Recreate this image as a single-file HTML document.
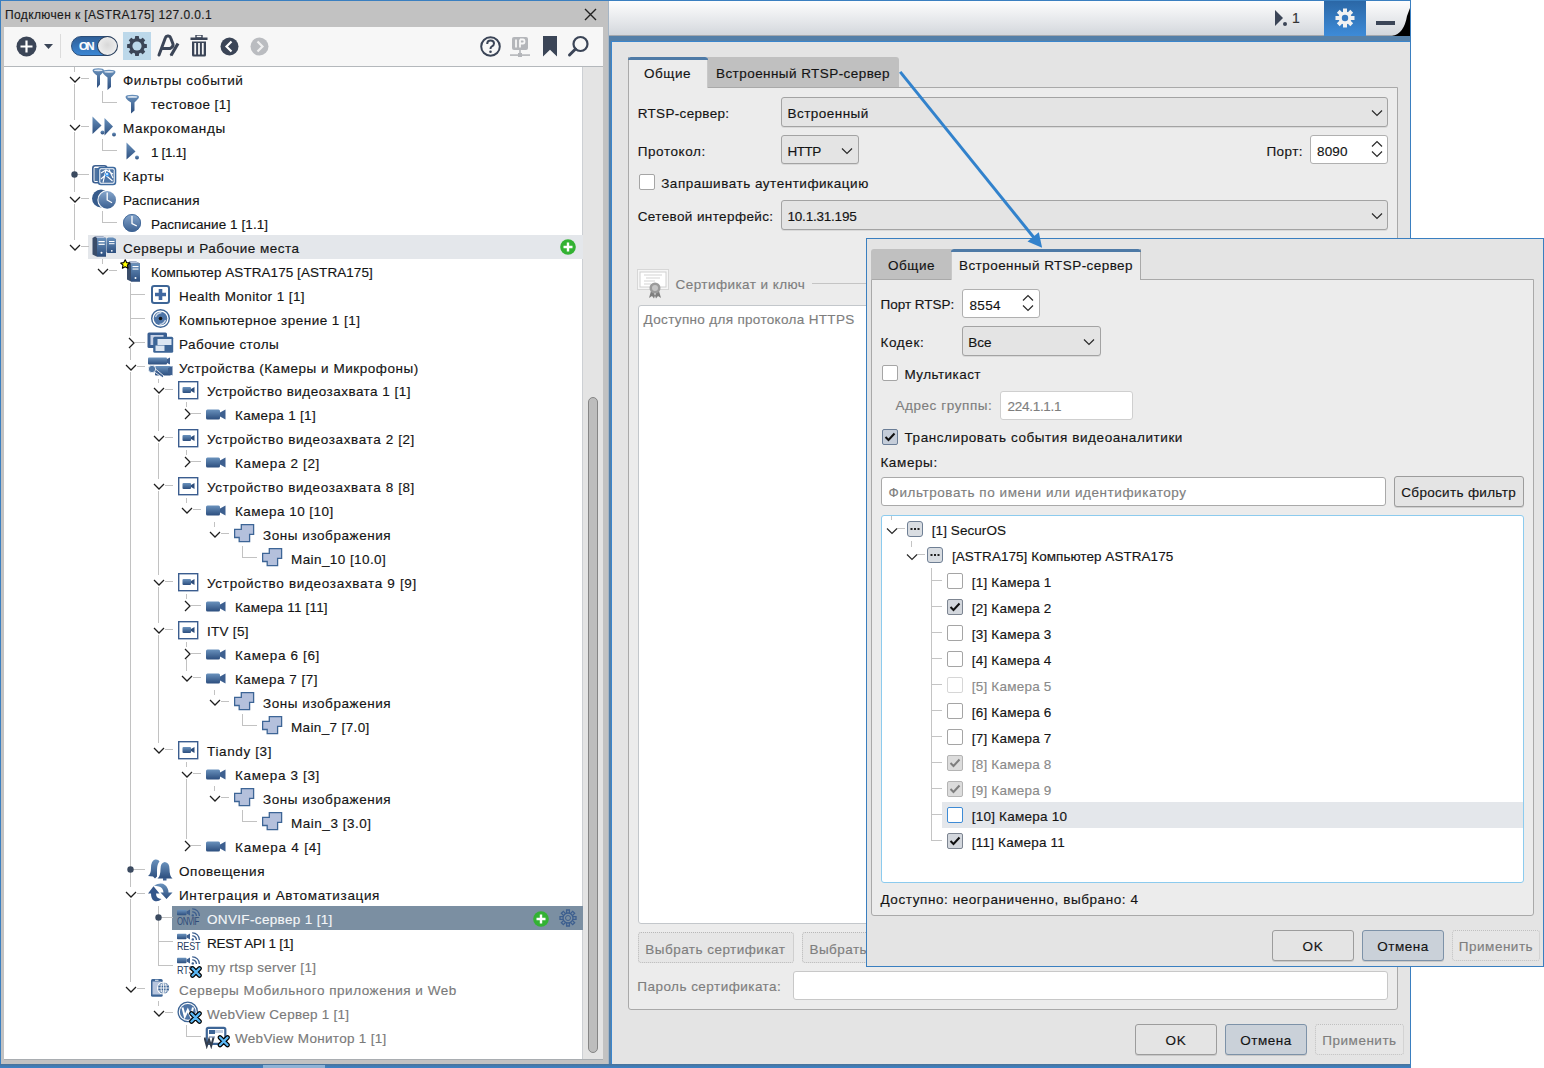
<!DOCTYPE html>
<html><head><meta charset="utf-8"><style>
html,body{margin:0;padding:0;width:1544px;height:1068px;overflow:hidden;background:#fff;}
body{position:relative;font-family:"Liberation Sans", sans-serif;}
body>div,body>svg{position:absolute;box-sizing:border-box;}
.t{white-space:nowrap;line-height:20px;-webkit-text-stroke:0.15px currentColor;}

</style></head><body>
<svg style="left:0;top:0;width:0;height:0" width="0" height="0"><defs>
<linearGradient id="gIcon" x1="0" y1="0" x2="0" y2="1"><stop offset="0" stop-color="#6a92bd"/><stop offset="1" stop-color="#2c4e7e"/></linearGradient>
<linearGradient id="gTitle" x1="0" y1="0" x2="0" y2="1"><stop offset="0" stop-color="#ffffff"/><stop offset="1" stop-color="#d0d4d9"/></linearGradient>
<linearGradient id="gGear" x1="0" y1="0" x2="0" y2="1"><stop offset="0" stop-color="#2d6aaa"/><stop offset="1" stop-color="#3f8fdc"/></linearGradient>
<linearGradient id="gClock" x1="0" y1="0" x2="0" y2="1"><stop offset="0" stop-color="#86a6cc"/><stop offset="1" stop-color="#3a5f90"/></linearGradient>
<linearGradient id="gZone" x1="0" y1="0" x2="0" y2="1"><stop offset="0" stop-color="#c5cde0"/><stop offset="1" stop-color="#9eaccc"/></linearGradient>
</defs></svg>
<div style="left:0px;top:0px;width:1411px;height:1px;background:#3a7fc0"></div>
<div style="left:0px;top:0px;width:1px;height:1068px;background:#3a7fc0"></div>
<div style="left:1px;top:1px;width:607px;height:1063px;background:#c2c2c2"></div>
<div class="t" style="left:5.0px;top:5px;font-size:12px;color:#1a1a1a;letter-spacing:0.384px;">Подключен к [ASTRA175] 127.0.0.1</div>
<svg style="left:584px;top:8px;" width="13" height="13" viewBox="0 0 13 13"><path d="M1 1L12 12M12 1L1 12" stroke="#222" stroke-width="1.4"/></svg>
<div style="left:4px;top:27px;width:599px;height:39px;background:#f7f7f7"></div>
<div style="left:4px;top:66px;width:599px;height:1px;background:#b4b8bc"></div>
<div style="left:4px;top:67px;width:578px;height:992px;background:#ffffff"></div>
<div style="left:4px;top:1059px;width:599px;height:1px;background:#a9adb1"></div>
<div style="left:582px;top:67px;width:21px;height:992px;background:#e4e4e4;border-left:1px solid #cdd0d4"></div>
<div style="left:588px;top:397px;width:10px;height:656px;background:#bdbdbd;border:1px solid #858585;border-radius:5px"></div>
<div style="left:0px;top:1064px;width:1411px;height:4px;background:linear-gradient(#4a7399,#3b82c8)"></div>
<div style="left:263px;top:1065px;width:62px;height:3px;background:#8fb3d6"></div>
<div style="left:608px;top:1px;width:1px;height:1063px;background:#a5b5c5"></div>
<div style="left:609px;top:1px;width:801px;height:35px;background:linear-gradient(#fdfdfd,#e6e8eb 55%,#d2d6db)"></div>
<div style="left:609px;top:35px;width:801px;height:1px;background:#a4a8ad"></div>
<div style="left:1324px;top:1px;width:42px;height:35px;background:linear-gradient(#2b67a6,#3d8bd8)"></div>
<svg style="left:1390px;top:8px;" width="20" height="28" viewBox="0 0 20 28"><path d="M20 0 L20 28 L2 28 Q14 26 17 8 Z" fill="#000"/></svg>
<div style="left:609px;top:36px;width:801px;height:5px;background:#5580a8"></div>
<div style="left:609px;top:36px;width:3px;height:1028px;background:#5580a8"></div>
<div style="left:611px;top:41px;width:799px;height:1px;background:#3a85cc"></div>
<div style="left:611px;top:41px;width:1px;height:1023px;background:#3a85cc"></div>
<div style="left:1410px;top:0px;width:1px;height:1068px;background:#3a7fc0"></div>
<div style="left:612px;top:42px;width:798px;height:1022px;background:#e4e4e4"></div>
<svg style="left:1274px;top:9px;" width="14" height="18" viewBox="0 0 14 18"><path d="M1 1 L9 9 L1 17 Z" fill="#3b4557"/><circle cx="11" cy="15" r="2" fill="#3b4557"/></svg>
<div class="t" style="left:1292.0px;top:8px;font-size:14px;color:#333;letter-spacing:-0.797px;">1</div>
<svg style="left:1334px;top:7px;" width="22" height="22" viewBox="0 0 22 22"><g fill="#f2f2f2"><circle cx="11" cy="11" r="6.5"/><rect x="9" y="1.5" width="4" height="5" transform="rotate(0 11 11)"/><rect x="9" y="1.5" width="4" height="5" transform="rotate(45 11 11)"/><rect x="9" y="1.5" width="4" height="5" transform="rotate(90 11 11)"/><rect x="9" y="1.5" width="4" height="5" transform="rotate(135 11 11)"/><rect x="9" y="1.5" width="4" height="5" transform="rotate(180 11 11)"/><rect x="9" y="1.5" width="4" height="5" transform="rotate(225 11 11)"/><rect x="9" y="1.5" width="4" height="5" transform="rotate(270 11 11)"/><rect x="9" y="1.5" width="4" height="5" transform="rotate(315 11 11)"/></g><circle cx="11" cy="11" r="3.2" fill="#3579c0"/></svg>
<div style="left:1376px;top:21px;width:19px;height:4px;background:#3b4557"></div>
<div style="left:707px;top:57px;width:192px;height:30px;background:#c0c0c0;border-top-right-radius:3px"></div>
<div style="left:628px;top:87px;width:770px;height:923px;background:#ececec;border:1px solid #a9a9a9;border-radius:0 0 3px 3px"></div>
<div style="left:628px;top:57px;width:80px;height:31px;background:#ececec;border-left:1px solid #a9a9a9;border-right:1px solid #c8c8c8"></div>
<div style="left:628px;top:57px;width:80px;height:3px;background:#4e7aa6;border-radius:3px 3px 0 0"></div>
<div class="t" style="left:644.0px;top:64px;font-size:13.5px;color:#141414;letter-spacing:0.522px;">Общие</div>
<div class="t" style="left:716.0px;top:64px;font-size:13.5px;color:#141414;letter-spacing:0.435px;">Встроенный RTSP-сервер</div>
<div class="t" style="left:637.7px;top:104px;font-size:13.5px;color:#141414;letter-spacing:0.324px;">RTSP-сервер:</div>
<div style="left:781px;top:97px;width:607px;height:30px;background:#e4e4e4;border:1px solid #a3a3a3;border-radius:3px;box-shadow:0 1px 0 rgba(0,0,0,0.08)"></div>
<div class="t" style="left:787.5px;top:104px;font-size:13.5px;color:#141414;letter-spacing:0.467px;">Встроенный</div>
<svg style="left:1371px;top:109px;" width="12" height="8" viewBox="0 0 12 8"><path d="M1 1.5 L6 6.5 L11 1.5" fill="none" stroke="#2a2a2a" stroke-width="1.2"/></svg>
<div class="t" style="left:637.7px;top:142px;font-size:13.5px;color:#141414;letter-spacing:0.593px;">Протокол:</div>
<div style="left:781px;top:135px;width:78px;height:29px;background:#e4e4e4;border:1px solid #a3a3a3;border-radius:3px;box-shadow:0 1px 0 rgba(0,0,0,0.08)"></div>
<div class="t" style="left:787.5px;top:142px;font-size:13.5px;color:#141414;letter-spacing:-0.512px;">HTTP</div>
<svg style="left:841px;top:147px;" width="12" height="8" viewBox="0 0 12 8"><path d="M1 1.5 L6 6.5 L11 1.5" fill="none" stroke="#2a2a2a" stroke-width="1.2"/></svg>
<div class="t" style="left:1266.4px;top:142px;font-size:13.5px;color:#141414;letter-spacing:0.447px;">Порт:</div>
<div style="left:1310px;top:135px;width:78px;height:29px;background:#fff;border:1px solid #b0b0b0;border-radius:3px"></div>
<div class="t" style="left:1317.0px;top:142px;font-size:13.5px;color:#141414;letter-spacing:0.150px;">8090</div>
<svg style="left:1371px;top:139px;" width="12" height="20" viewBox="0 0 12 20"><path d="M1 7.5 L6 2.5 L11 7.5 M1 12.5 L6 17.5 L11 12.5" fill="none" stroke="#2a2a2a" stroke-width="1.2"/></svg>
<div style="left:639px;top:174px;width:16px;height:16px;background:#fff;border:1px solid #a5a5a5;border-radius:2px"></div>
<div class="t" style="left:661.2px;top:174px;font-size:13.5px;color:#141414;letter-spacing:0.517px;">Запрашивать аутентификацию</div>
<div class="t" style="left:637.7px;top:207px;font-size:13.5px;color:#141414;letter-spacing:0.385px;">Сетевой интерфейс:</div>
<div style="left:781px;top:200px;width:607px;height:30px;background:#e4e4e4;border:1px solid #a3a3a3;border-radius:3px;box-shadow:0 1px 0 rgba(0,0,0,0.08)"></div>
<div class="t" style="left:787.5px;top:207px;font-size:13.5px;color:#141414;letter-spacing:-0.212px;">10.1.31.195</div>
<svg style="left:1371px;top:212px;" width="12" height="8" viewBox="0 0 12 8"><path d="M1 1.5 L6 6.5 L11 1.5" fill="none" stroke="#2a2a2a" stroke-width="1.2"/></svg>
<svg style="left:637px;top:269px;" width="33" height="30" viewBox="0 0 33 30"><rect x="0.5" y="0.5" width="31" height="20" fill="#f6f6f6" stroke="#bdbdbd" stroke-dasharray="1 1"/><rect x="3" y="3" width="26" height="15" fill="#fff" stroke="#d0d0d0"/><path d="M7 6H25M9 9H23M7 12H18M7 15H14" stroke="#c8c8c8" stroke-width="0.8"/><path d="M14 22 L12 29 L15 27 L17 29.5 L19 24 Z M22 22 L24 29 L21 27 L19 29.5 L17 24 Z" fill="#7e7e7e"/><circle cx="18" cy="19" r="5.5" fill="#9a9a9a"/><circle cx="18" cy="19" r="3" fill="#c4c4c4"/></svg>
<div class="t" style="left:675.6px;top:275px;font-size:13.5px;color:#7e7e7e;letter-spacing:0.431px;">Сертификат и ключ</div>
<div style="left:812px;top:283px;width:576px;height:1px;background:#c4c4c4"></div>
<div style="left:638px;top:305px;width:750px;height:619px;background:#fff;border:1px solid #c3c7cb;border-radius:3px"></div>
<div class="t" style="left:643.6px;top:310px;font-size:13.5px;color:#7e7e7e;letter-spacing:0.332px;">Доступно для протокола HTTPS</div>
<div style="left:638px;top:932px;width:156px;height:31px;background:#e6e6e6;border:1px dotted #b8b8b8;border-radius:3px"></div>
<div class="t" style="left:645.3px;top:940px;font-size:13.5px;color:#7e7e7e;letter-spacing:0.475px;">Выбрать сертификат</div>
<div style="left:802px;top:932px;width:156px;height:31px;background:#e6e6e6;border:1px dotted #b8b8b8;border-radius:3px"></div>
<div class="t" style="left:809.4px;top:940px;font-size:13.5px;color:#7e7e7e;letter-spacing:0.482px;">Выбрать ключ</div>
<div class="t" style="left:637.3px;top:977px;font-size:13.5px;color:#7e7e7e;letter-spacing:0.466px;">Пароль сертификата:</div>
<div style="left:793px;top:971px;width:595px;height:29px;background:#fff;border:1px solid #c8c8c8;border-radius:3px"></div>
<div style="left:1135px;top:1024px;width:82px;height:31px;background:#e4e4e4;border:1px solid #9c9c9c;border-radius:3px;box-shadow:0 1px 0 rgba(0,0,0,0.12)"></div>
<div class="t" style="left:1176.0px;top:1031px;font-size:13.5px;color:#141414;letter-spacing:0.634px;transform:translateX(-50%);">OK</div>
<div style="left:1225px;top:1024px;width:82px;height:31px;background:#cad1d9;border:1px solid #7d92a8;border-radius:3px;box-shadow:0 1px 0 rgba(0,0,0,0.12)"></div>
<div class="t" style="left:1266.0px;top:1031px;font-size:13.5px;color:#141414;letter-spacing:0.525px;transform:translateX(-50%);">Отмена</div>
<div style="left:1315px;top:1024px;width:89px;height:31px;background:#e6e6e6;border:1px dotted #c0c0c0;border-radius:3px"></div>
<div class="t" style="left:1359.5px;top:1031px;font-size:13.5px;color:#7e7e7e;letter-spacing:0.504px;transform:translateX(-50%);">Применить</div>
<div style="left:866px;top:238px;width:678px;height:729px;background:#e4e4e4;border:1px solid #3a7fc0"></div>
<div style="left:871px;top:249px;width:81px;height:30px;background:#c0c0c0;border-top-left-radius:3px"></div>
<div style="left:871px;top:279px;width:663px;height:637px;background:#ececec;border:1px solid #a9a9a9;border-radius:0 0 3px 3px"></div>
<div style="left:951px;top:249px;width:190px;height:31px;background:#ececec;border-left:1px solid #c8c8c8;border-right:1px solid #a9a9a9"></div>
<div style="left:951px;top:249px;width:190px;height:3px;background:#4e7aa6;border-radius:3px 3px 0 0"></div>
<div class="t" style="left:888.0px;top:256px;font-size:13.5px;color:#141414;letter-spacing:0.522px;">Общие</div>
<div class="t" style="left:959.0px;top:256px;font-size:13.5px;color:#141414;letter-spacing:0.435px;">Встроенный RTSP-сервер</div>
<div class="t" style="left:880.5px;top:295px;font-size:13.5px;color:#141414;letter-spacing:-0.008px;">Порт RTSP:</div>
<div style="left:962px;top:289px;width:78px;height:29px;background:#fff;border:1px solid #b0b0b0;border-radius:3px"></div>
<div class="t" style="left:969.4px;top:296px;font-size:13.5px;color:#141414;letter-spacing:0.363px;">8554</div>
<svg style="left:1022px;top:293px;" width="12" height="20" viewBox="0 0 12 20"><path d="M1 7.5 L6 2.5 L11 7.5 M1 12.5 L6 17.5 L11 12.5" fill="none" stroke="#2a2a2a" stroke-width="1.2"/></svg>
<div class="t" style="left:880.5px;top:333px;font-size:13.5px;color:#141414;letter-spacing:0.629px;">Кодек:</div>
<div style="left:962px;top:326px;width:139px;height:30px;background:#e4e4e4;border:1px solid #a3a3a3;border-radius:3px;box-shadow:0 1px 0 rgba(0,0,0,0.08)"></div>
<div class="t" style="left:968.3px;top:333px;font-size:13.5px;color:#141414;letter-spacing:-0.022px;">Все</div>
<svg style="left:1083px;top:338px;" width="12" height="8" viewBox="0 0 12 8"><path d="M1 1.5 L6 6.5 L11 1.5" fill="none" stroke="#2a2a2a" stroke-width="1.2"/></svg>
<div style="left:882px;top:365px;width:16px;height:16px;background:#fff;border:1px solid #a5a5a5;border-radius:2px"></div>
<div class="t" style="left:904.5px;top:365px;font-size:13.5px;color:#141414;letter-spacing:0.442px;">Мультикаст</div>
<div class="t" style="left:895.4px;top:396px;font-size:13.5px;color:#7e7e7e;letter-spacing:0.576px;">Адрес группы:</div>
<div style="left:1000px;top:391px;width:133px;height:29px;background:#fff;border:1px solid #cfcfcf;border-radius:3px"></div>
<div class="t" style="left:1007.5px;top:397px;font-size:13.5px;color:#7e7e7e;letter-spacing:-0.279px;">224.1.1.1</div>
<div style="left:882px;top:429px;width:16px;height:16px;background:#c5cdd9;border:1px solid #6a7d96;border-radius:2px"></div>
<svg style="left:882px;top:429px;" width="16" height="16" viewBox="0 0 16 16"><path d="M3.5 8 L6.5 11 L12.5 4.5" fill="none" stroke="#111" stroke-width="2"/></svg>
<div class="t" style="left:904.5px;top:428px;font-size:13.5px;color:#141414;letter-spacing:0.579px;">Транслировать события видеоаналитики</div>
<div class="t" style="left:880.4px;top:453px;font-size:13.5px;color:#141414;letter-spacing:0.611px;">Камеры:</div>
<div style="left:881px;top:477px;width:505px;height:29px;background:#fff;border:1px solid #a9a9a9;border-radius:3px"></div>
<div class="t" style="left:888.6px;top:483px;font-size:13.5px;color:#7e7e7e;letter-spacing:0.558px;">Фильтровать по имени или идентификатору</div>
<div style="left:1394px;top:476px;width:130px;height:31px;background:#e4e4e4;border:1px solid #9c9c9c;border-radius:3px;box-shadow:0 1px 0 rgba(0,0,0,0.12)"></div>
<div class="t" style="left:1401.3px;top:483px;font-size:13.5px;color:#141414;letter-spacing:0.316px;">Сбросить фильтр</div>
<div style="left:881px;top:515px;width:643px;height:368px;background:#fff;border:1px solid #8ccbee;border-radius:3px"></div>
<div style="left:891px;top:516px;width:1px;height:4px;background:#c4c4c4"></div>
<div style="left:911px;top:541px;width:1px;height:6px;background:#c4c4c4"></div>
<div style="left:931px;top:568px;width:1px;height:273px;background:#c4c4c4"></div>
<div style="left:931px;top:580px;width:11px;height:1px;background:#c4c4c4"></div>
<div style="left:931px;top:606px;width:11px;height:1px;background:#c4c4c4"></div>
<div style="left:931px;top:632px;width:11px;height:1px;background:#c4c4c4"></div>
<div style="left:931px;top:658px;width:11px;height:1px;background:#c4c4c4"></div>
<div style="left:931px;top:684px;width:11px;height:1px;background:#c4c4c4"></div>
<div style="left:931px;top:710px;width:11px;height:1px;background:#c4c4c4"></div>
<div style="left:931px;top:736px;width:11px;height:1px;background:#c4c4c4"></div>
<div style="left:931px;top:762px;width:11px;height:1px;background:#c4c4c4"></div>
<div style="left:931px;top:788px;width:11px;height:1px;background:#c4c4c4"></div>
<div style="left:931px;top:814px;width:11px;height:1px;background:#c4c4c4"></div>
<div style="left:931px;top:840px;width:11px;height:1px;background:#c4c4c4"></div>
<div style="left:897px;top:528px;width:8px;height:1px;background:#c4c4c4"></div>
<div style="left:917px;top:554px;width:8px;height:1px;background:#c4c4c4"></div>
<div style="left:942px;top:802px;width:581px;height:26px;background:#e4e7eb"></div>
<svg style="left:886px;top:527px;" width="12" height="8" viewBox="0 0 12 8"><path d="M1 1.5 L6 6.5 L11 1.5" fill="none" stroke="#2a2a2a" stroke-width="1.2"/></svg>
<svg style="left:906px;top:553px;" width="12" height="8" viewBox="0 0 12 8"><path d="M1 1.5 L6 6.5 L11 1.5" fill="none" stroke="#2a2a2a" stroke-width="1.2"/></svg>
<div style="left:907px;top:521px;width:16px;height:16px;background:#d9dde2;border:1px solid #6f7f94;border-radius:3px"></div>
<svg style="left:907px;top:521px;" width="16" height="16" viewBox="0 0 16 16"><g fill="#222"><rect x="3.5" y="7" width="2" height="2"/><rect x="7" y="7" width="2" height="2"/><rect x="10.5" y="7" width="2" height="2"/></g></svg>
<div style="left:927px;top:547px;width:16px;height:16px;background:#d9dde2;border:1px solid #6f7f94;border-radius:3px"></div>
<svg style="left:927px;top:547px;" width="16" height="16" viewBox="0 0 16 16"><g fill="#222"><rect x="3.5" y="7" width="2" height="2"/><rect x="7" y="7" width="2" height="2"/><rect x="10.5" y="7" width="2" height="2"/></g></svg>
<div class="t" style="left:931.8px;top:521px;font-size:13.5px;color:#141414;letter-spacing:0.068px;">[1] SecurOS</div>
<div class="t" style="left:951.9px;top:547px;font-size:13.5px;color:#141414;letter-spacing:0.050px;">[ASTRA175] Компьютер ASTRA175</div>
<div style="left:947px;top:573px;width:16px;height:16px;background:#fff;border:1px solid #a5a5a5;border-radius:2px"></div>
<div class="t" style="left:971.7px;top:573px;font-size:13.5px;color:#141414;letter-spacing:0.225px;">[1] Камера 1</div>
<div style="left:947px;top:599px;width:16px;height:16px;background:#d3d7dd;border:1px solid #7d8591;border-radius:2px"></div>
<svg style="left:947px;top:599px;" width="16" height="16" viewBox="0 0 16 16"><path d="M3.5 8 L6.5 11 L12.5 4.5" fill="none" stroke="#111" stroke-width="2"/></svg>
<div class="t" style="left:971.7px;top:599px;font-size:13.5px;color:#141414;letter-spacing:0.225px;">[2] Камера 2</div>
<div style="left:947px;top:625px;width:16px;height:16px;background:#fff;border:1px solid #a5a5a5;border-radius:2px"></div>
<div class="t" style="left:971.7px;top:625px;font-size:13.5px;color:#141414;letter-spacing:0.225px;">[3] Камера 3</div>
<div style="left:947px;top:651px;width:16px;height:16px;background:#fff;border:1px solid #a5a5a5;border-radius:2px"></div>
<div class="t" style="left:971.7px;top:651px;font-size:13.5px;color:#141414;letter-spacing:0.225px;">[4] Камера 4</div>
<div style="left:947px;top:677px;width:16px;height:16px;background:#fff;border:1px solid #d6d6d6;border-radius:2px"></div>
<div class="t" style="left:971.7px;top:677px;font-size:13.5px;color:#8a8a8a;letter-spacing:0.225px;">[5] Камера 5</div>
<div style="left:947px;top:703px;width:16px;height:16px;background:#fff;border:1px solid #a5a5a5;border-radius:2px"></div>
<div class="t" style="left:971.7px;top:703px;font-size:13.5px;color:#141414;letter-spacing:0.225px;">[6] Камера 6</div>
<div style="left:947px;top:729px;width:16px;height:16px;background:#fff;border:1px solid #a5a5a5;border-radius:2px"></div>
<div class="t" style="left:971.7px;top:729px;font-size:13.5px;color:#141414;letter-spacing:0.225px;">[7] Камера 7</div>
<div style="left:947px;top:755px;width:16px;height:16px;background:#dcdcdc;border:1px solid #b4b4b4;border-radius:2px"></div>
<svg style="left:947px;top:755px;" width="16" height="16" viewBox="0 0 16 16"><path d="M3.5 8 L6.5 11 L12.5 4.5" fill="none" stroke="#7e7e7e" stroke-width="2"/></svg>
<div class="t" style="left:971.7px;top:755px;font-size:13.5px;color:#8a8a8a;letter-spacing:0.225px;">[8] Камера 8</div>
<div style="left:947px;top:781px;width:16px;height:16px;background:#dcdcdc;border:1px solid #b4b4b4;border-radius:2px"></div>
<svg style="left:947px;top:781px;" width="16" height="16" viewBox="0 0 16 16"><path d="M3.5 8 L6.5 11 L12.5 4.5" fill="none" stroke="#7e7e7e" stroke-width="2"/></svg>
<div class="t" style="left:971.7px;top:781px;font-size:13.5px;color:#8a8a8a;letter-spacing:0.225px;">[9] Камера 9</div>
<div style="left:947px;top:807px;width:16px;height:16px;background:#fff;border:1px solid #3d8bd6;border-radius:2px"></div>
<div class="t" style="left:971.7px;top:807px;font-size:13.5px;color:#141414;letter-spacing:0.231px;">[10] Камера 10</div>
<div style="left:947px;top:833px;width:16px;height:16px;background:#d3d7dd;border:1px solid #7d8591;border-radius:2px"></div>
<svg style="left:947px;top:833px;" width="16" height="16" viewBox="0 0 16 16"><path d="M3.5 8 L6.5 11 L12.5 4.5" fill="none" stroke="#111" stroke-width="2"/></svg>
<div class="t" style="left:971.7px;top:833px;font-size:13.5px;color:#141414;letter-spacing:0.226px;">[11] Камера 11</div>
<div class="t" style="left:880.5px;top:890px;font-size:13.5px;color:#141414;letter-spacing:0.575px;">Доступно: неограниченно, выбрано: 4</div>
<div style="left:1272px;top:930px;width:82px;height:31px;background:#e4e4e4;border:1px solid #9c9c9c;border-radius:3px;box-shadow:0 1px 0 rgba(0,0,0,0.12)"></div>
<div class="t" style="left:1313.0px;top:937px;font-size:13.5px;color:#141414;letter-spacing:0.634px;transform:translateX(-50%);">OK</div>
<div style="left:1362px;top:930px;width:82px;height:31px;background:#cad1d9;border:1px solid #7d92a8;border-radius:3px;box-shadow:0 1px 0 rgba(0,0,0,0.12)"></div>
<div class="t" style="left:1403.0px;top:937px;font-size:13.5px;color:#141414;letter-spacing:0.525px;transform:translateX(-50%);">Отмена</div>
<div style="left:1452px;top:930px;width:88px;height:31px;background:#e6e6e6;border:1px dotted #c0c0c0;border-radius:3px"></div>
<div class="t" style="left:1496.0px;top:937px;font-size:13.5px;color:#7e7e7e;letter-spacing:0.504px;transform:translateX(-50%);">Применить</div>
<svg style="left:890px;top:60px;" width="170" height="200" viewBox="0 0 170 200"><path d="M10.2 11.9 L145 179" stroke="#3282cc" stroke-width="3" fill="none"/><path d="M152.1 187.8 L137.5 181.6 L148.8 172.3 Z" fill="#3282cc"/></svg>
<div style="left:88px;top:235px;width:495px;height:24px;background:#e4e7eb"></div>
<div style="left:172px;top:906px;width:411px;height:24px;background:#7b8fa2"></div>
<div style="left:74px;top:67px;width:1px;height:180px;background:#c2c2c2"></div>
<div style="left:102px;top:91px;width:1px;height:12px;background:#c2c2c2"></div>
<div style="left:102px;top:139px;width:1px;height:12px;background:#c2c2c2"></div>
<div style="left:102px;top:211px;width:1px;height:12px;background:#c2c2c2"></div>
<div style="left:102px;top:259px;width:1px;height:12px;background:#c2c2c2"></div>
<div style="left:130px;top:283px;width:1px;height:706px;background:#c2c2c2"></div>
<div style="left:158px;top:379px;width:1px;height:371px;background:#c2c2c2"></div>
<div style="left:186px;top:402px;width:1px;height:12px;background:#c2c2c2"></div>
<div style="left:186px;top:450px;width:1px;height:12px;background:#c2c2c2"></div>
<div style="left:186px;top:498px;width:1px;height:12px;background:#c2c2c2"></div>
<div style="left:214px;top:522px;width:1px;height:12px;background:#c2c2c2"></div>
<div style="left:242px;top:546px;width:1px;height:12px;background:#c2c2c2"></div>
<div style="left:186px;top:594px;width:1px;height:12px;background:#c2c2c2"></div>
<div style="left:186px;top:642px;width:1px;height:36px;background:#c2c2c2"></div>
<div style="left:214px;top:690px;width:1px;height:12px;background:#c2c2c2"></div>
<div style="left:242px;top:714px;width:1px;height:12px;background:#c2c2c2"></div>
<div style="left:186px;top:762px;width:1px;height:84px;background:#c2c2c2"></div>
<div style="left:214px;top:786px;width:1px;height:12px;background:#c2c2c2"></div>
<div style="left:242px;top:810px;width:1px;height:12px;background:#c2c2c2"></div>
<div style="left:158px;top:906px;width:1px;height:60px;background:#c2c2c2"></div>
<div style="left:158px;top:1001px;width:1px;height:12px;background:#c2c2c2"></div>
<div style="left:186px;top:1025px;width:1px;height:12px;background:#c2c2c2"></div>
<div style="left:74px;top:78px;width:15px;height:1px;background:#c2c2c2"></div>
<div style="left:102px;top:102px;width:15px;height:1px;background:#c2c2c2"></div>
<div style="left:74px;top:126px;width:15px;height:1px;background:#c2c2c2"></div>
<div style="left:102px;top:150px;width:15px;height:1px;background:#c2c2c2"></div>
<div style="left:74px;top:174px;width:15px;height:1px;background:#c2c2c2"></div>
<div style="left:74px;top:198px;width:15px;height:1px;background:#c2c2c2"></div>
<div style="left:102px;top:222px;width:15px;height:1px;background:#c2c2c2"></div>
<div style="left:74px;top:246px;width:15px;height:1px;background:#c2c2c2"></div>
<div style="left:102px;top:270px;width:15px;height:1px;background:#c2c2c2"></div>
<div style="left:130px;top:294px;width:15px;height:1px;background:#c2c2c2"></div>
<div style="left:130px;top:318px;width:15px;height:1px;background:#c2c2c2"></div>
<div style="left:130px;top:342px;width:15px;height:1px;background:#c2c2c2"></div>
<div style="left:130px;top:366px;width:15px;height:1px;background:#c2c2c2"></div>
<div style="left:158px;top:389px;width:15px;height:1px;background:#c2c2c2"></div>
<div style="left:186px;top:413px;width:15px;height:1px;background:#c2c2c2"></div>
<div style="left:158px;top:437px;width:15px;height:1px;background:#c2c2c2"></div>
<div style="left:186px;top:461px;width:15px;height:1px;background:#c2c2c2"></div>
<div style="left:158px;top:485px;width:15px;height:1px;background:#c2c2c2"></div>
<div style="left:186px;top:509px;width:15px;height:1px;background:#c2c2c2"></div>
<div style="left:214px;top:533px;width:15px;height:1px;background:#c2c2c2"></div>
<div style="left:242px;top:557px;width:15px;height:1px;background:#c2c2c2"></div>
<div style="left:158px;top:581px;width:15px;height:1px;background:#c2c2c2"></div>
<div style="left:186px;top:605px;width:15px;height:1px;background:#c2c2c2"></div>
<div style="left:158px;top:629px;width:15px;height:1px;background:#c2c2c2"></div>
<div style="left:186px;top:653px;width:15px;height:1px;background:#c2c2c2"></div>
<div style="left:186px;top:677px;width:15px;height:1px;background:#c2c2c2"></div>
<div style="left:214px;top:701px;width:15px;height:1px;background:#c2c2c2"></div>
<div style="left:242px;top:725px;width:15px;height:1px;background:#c2c2c2"></div>
<div style="left:158px;top:749px;width:15px;height:1px;background:#c2c2c2"></div>
<div style="left:186px;top:773px;width:15px;height:1px;background:#c2c2c2"></div>
<div style="left:214px;top:797px;width:15px;height:1px;background:#c2c2c2"></div>
<div style="left:242px;top:821px;width:15px;height:1px;background:#c2c2c2"></div>
<div style="left:186px;top:845px;width:15px;height:1px;background:#c2c2c2"></div>
<div style="left:130px;top:869px;width:15px;height:1px;background:#c2c2c2"></div>
<div style="left:130px;top:893px;width:15px;height:1px;background:#c2c2c2"></div>
<div style="left:158px;top:917px;width:15px;height:1px;background:#c2c2c2"></div>
<div style="left:158px;top:941px;width:15px;height:1px;background:#c2c2c2"></div>
<div style="left:158px;top:965px;width:15px;height:1px;background:#c2c2c2"></div>
<div style="left:130px;top:988px;width:15px;height:1px;background:#c2c2c2"></div>
<div style="left:158px;top:1012px;width:15px;height:1px;background:#c2c2c2"></div>
<div style="left:186px;top:1036px;width:15px;height:1px;background:#c2c2c2"></div>
<div style="left:68.0px;top:72px;width:13px;height:12px;background:#fff"></div>
<svg style="left:68.5px;top:76px;" width="12" height="7" viewBox="0 0 12 7"><path d="M1 1 L6 6 L11 1" fill="none" stroke="#1e1e1e" stroke-width="1.25"/></svg>
<div style="left:68.0px;top:120px;width:13px;height:12px;background:#fff"></div>
<svg style="left:68.5px;top:124px;" width="12" height="7" viewBox="0 0 12 7"><path d="M1 1 L6 6 L11 1" fill="none" stroke="#1e1e1e" stroke-width="1.25"/></svg>
<svg style="left:71.0px;top:171px;" width="7" height="7" viewBox="0 0 7 7"><circle cx="3.5" cy="3.5" r="3.2" fill="#3b4a60"/></svg>
<div style="left:68.0px;top:192px;width:13px;height:12px;background:#fff"></div>
<svg style="left:68.5px;top:196px;" width="12" height="7" viewBox="0 0 12 7"><path d="M1 1 L6 6 L11 1" fill="none" stroke="#1e1e1e" stroke-width="1.25"/></svg>
<div style="left:68.0px;top:240px;width:13px;height:12px;background:#fff"></div>
<svg style="left:68.5px;top:244px;" width="12" height="7" viewBox="0 0 12 7"><path d="M1 1 L6 6 L11 1" fill="none" stroke="#1e1e1e" stroke-width="1.25"/></svg>
<div style="left:96.0px;top:264px;width:13px;height:12px;background:#fff"></div>
<svg style="left:96.5px;top:268px;" width="12" height="7" viewBox="0 0 12 7"><path d="M1 1 L6 6 L11 1" fill="none" stroke="#1e1e1e" stroke-width="1.25"/></svg>
<div style="left:126.0px;top:336px;width:9px;height:12px;background:#fff"></div>
<svg style="left:127.5px;top:337px;" width="7" height="12" viewBox="0 0 7 12"><path d="M1 1 L6 6 L1 11" fill="none" stroke="#1e1e1e" stroke-width="1.25"/></svg>
<div style="left:124.0px;top:360px;width:13px;height:12px;background:#fff"></div>
<svg style="left:124.5px;top:364px;" width="12" height="7" viewBox="0 0 12 7"><path d="M1 1 L6 6 L11 1" fill="none" stroke="#1e1e1e" stroke-width="1.25"/></svg>
<div style="left:152.0px;top:383px;width:13px;height:12px;background:#fff"></div>
<svg style="left:152.5px;top:387px;" width="12" height="7" viewBox="0 0 12 7"><path d="M1 1 L6 6 L11 1" fill="none" stroke="#1e1e1e" stroke-width="1.25"/></svg>
<div style="left:182.0px;top:407px;width:9px;height:12px;background:#fff"></div>
<svg style="left:183.5px;top:408px;" width="7" height="12" viewBox="0 0 7 12"><path d="M1 1 L6 6 L1 11" fill="none" stroke="#1e1e1e" stroke-width="1.25"/></svg>
<div style="left:152.0px;top:431px;width:13px;height:12px;background:#fff"></div>
<svg style="left:152.5px;top:435px;" width="12" height="7" viewBox="0 0 12 7"><path d="M1 1 L6 6 L11 1" fill="none" stroke="#1e1e1e" stroke-width="1.25"/></svg>
<div style="left:182.0px;top:455px;width:9px;height:12px;background:#fff"></div>
<svg style="left:183.5px;top:456px;" width="7" height="12" viewBox="0 0 7 12"><path d="M1 1 L6 6 L1 11" fill="none" stroke="#1e1e1e" stroke-width="1.25"/></svg>
<div style="left:152.0px;top:479px;width:13px;height:12px;background:#fff"></div>
<svg style="left:152.5px;top:483px;" width="12" height="7" viewBox="0 0 12 7"><path d="M1 1 L6 6 L11 1" fill="none" stroke="#1e1e1e" stroke-width="1.25"/></svg>
<div style="left:180.0px;top:503px;width:13px;height:12px;background:#fff"></div>
<svg style="left:180.5px;top:507px;" width="12" height="7" viewBox="0 0 12 7"><path d="M1 1 L6 6 L11 1" fill="none" stroke="#1e1e1e" stroke-width="1.25"/></svg>
<div style="left:208.0px;top:527px;width:13px;height:12px;background:#fff"></div>
<svg style="left:208.5px;top:531px;" width="12" height="7" viewBox="0 0 12 7"><path d="M1 1 L6 6 L11 1" fill="none" stroke="#1e1e1e" stroke-width="1.25"/></svg>
<div style="left:152.0px;top:575px;width:13px;height:12px;background:#fff"></div>
<svg style="left:152.5px;top:579px;" width="12" height="7" viewBox="0 0 12 7"><path d="M1 1 L6 6 L11 1" fill="none" stroke="#1e1e1e" stroke-width="1.25"/></svg>
<div style="left:182.0px;top:599px;width:9px;height:12px;background:#fff"></div>
<svg style="left:183.5px;top:600px;" width="7" height="12" viewBox="0 0 7 12"><path d="M1 1 L6 6 L1 11" fill="none" stroke="#1e1e1e" stroke-width="1.25"/></svg>
<div style="left:152.0px;top:623px;width:13px;height:12px;background:#fff"></div>
<svg style="left:152.5px;top:627px;" width="12" height="7" viewBox="0 0 12 7"><path d="M1 1 L6 6 L11 1" fill="none" stroke="#1e1e1e" stroke-width="1.25"/></svg>
<div style="left:182.0px;top:647px;width:9px;height:12px;background:#fff"></div>
<svg style="left:183.5px;top:648px;" width="7" height="12" viewBox="0 0 7 12"><path d="M1 1 L6 6 L1 11" fill="none" stroke="#1e1e1e" stroke-width="1.25"/></svg>
<div style="left:180.0px;top:671px;width:13px;height:12px;background:#fff"></div>
<svg style="left:180.5px;top:675px;" width="12" height="7" viewBox="0 0 12 7"><path d="M1 1 L6 6 L11 1" fill="none" stroke="#1e1e1e" stroke-width="1.25"/></svg>
<div style="left:208.0px;top:695px;width:13px;height:12px;background:#fff"></div>
<svg style="left:208.5px;top:699px;" width="12" height="7" viewBox="0 0 12 7"><path d="M1 1 L6 6 L11 1" fill="none" stroke="#1e1e1e" stroke-width="1.25"/></svg>
<div style="left:152.0px;top:743px;width:13px;height:12px;background:#fff"></div>
<svg style="left:152.5px;top:747px;" width="12" height="7" viewBox="0 0 12 7"><path d="M1 1 L6 6 L11 1" fill="none" stroke="#1e1e1e" stroke-width="1.25"/></svg>
<div style="left:180.0px;top:767px;width:13px;height:12px;background:#fff"></div>
<svg style="left:180.5px;top:771px;" width="12" height="7" viewBox="0 0 12 7"><path d="M1 1 L6 6 L11 1" fill="none" stroke="#1e1e1e" stroke-width="1.25"/></svg>
<div style="left:208.0px;top:791px;width:13px;height:12px;background:#fff"></div>
<svg style="left:208.5px;top:795px;" width="12" height="7" viewBox="0 0 12 7"><path d="M1 1 L6 6 L11 1" fill="none" stroke="#1e1e1e" stroke-width="1.25"/></svg>
<div style="left:182.0px;top:839px;width:9px;height:12px;background:#fff"></div>
<svg style="left:183.5px;top:840px;" width="7" height="12" viewBox="0 0 7 12"><path d="M1 1 L6 6 L1 11" fill="none" stroke="#1e1e1e" stroke-width="1.25"/></svg>
<svg style="left:127.0px;top:866px;" width="7" height="7" viewBox="0 0 7 7"><circle cx="3.5" cy="3.5" r="3.2" fill="#3b4a60"/></svg>
<div style="left:124.0px;top:887px;width:13px;height:12px;background:#fff"></div>
<svg style="left:124.5px;top:891px;" width="12" height="7" viewBox="0 0 12 7"><path d="M1 1 L6 6 L11 1" fill="none" stroke="#1e1e1e" stroke-width="1.25"/></svg>
<svg style="left:155.0px;top:914px;" width="7" height="7" viewBox="0 0 7 7"><circle cx="3.5" cy="3.5" r="3.2" fill="#3b4a60"/></svg>
<div style="left:124.0px;top:982px;width:13px;height:12px;background:#fff"></div>
<svg style="left:124.5px;top:986px;" width="12" height="7" viewBox="0 0 12 7"><path d="M1 1 L6 6 L11 1" fill="none" stroke="#1e1e1e" stroke-width="1.25"/></svg>
<div style="left:152.0px;top:1006px;width:13px;height:12px;background:#fff"></div>
<svg style="left:152.5px;top:1010px;" width="12" height="7" viewBox="0 0 12 7"><path d="M1 1 L6 6 L11 1" fill="none" stroke="#1e1e1e" stroke-width="1.25"/></svg>
<div class="t" style="left:123.0px;top:71px;font-size:13.5px;color:#141414;letter-spacing:0.565px;">Фильтры событий</div>
<div class="t" style="left:151.0px;top:95px;font-size:13.5px;color:#141414;letter-spacing:0.438px;">тестовое [1]</div>
<div class="t" style="left:123.0px;top:119px;font-size:13.5px;color:#141414;letter-spacing:0.632px;">Макрокоманды</div>
<div class="t" style="left:151.0px;top:143px;font-size:13.5px;color:#141414;letter-spacing:-0.376px;">1 [1.1]</div>
<div class="t" style="left:123.0px;top:167px;font-size:13.5px;color:#141414;letter-spacing:0.643px;">Карты</div>
<div class="t" style="left:123.0px;top:191px;font-size:13.5px;color:#141414;letter-spacing:0.247px;">Расписания</div>
<div class="t" style="left:151.0px;top:215px;font-size:13.5px;color:#141414;letter-spacing:0.082px;">Расписание 1 [1.1]</div>
<div class="t" style="left:123.0px;top:239px;font-size:13.5px;color:#141414;letter-spacing:0.475px;">Серверы и Рабочие места</div>
<div class="t" style="left:151.0px;top:263px;font-size:13.5px;color:#141414;letter-spacing:0.064px;">Компьютер ASTRA175 [ASTRA175]</div>
<div class="t" style="left:179.0px;top:287px;font-size:13.5px;color:#141414;letter-spacing:0.409px;">Health Monitor 1 [1]</div>
<div class="t" style="left:179.0px;top:311px;font-size:13.5px;color:#141414;letter-spacing:0.463px;">Компьютерное зрение 1 [1]</div>
<div class="t" style="left:179.0px;top:335px;font-size:13.5px;color:#141414;letter-spacing:0.444px;">Рабочие столы</div>
<div class="t" style="left:179.0px;top:359px;font-size:13.5px;color:#141414;letter-spacing:0.530px;">Устройства (Камеры и Микрофоны)</div>
<div class="t" style="left:207.0px;top:382px;font-size:13.5px;color:#141414;letter-spacing:0.480px;">Устройство видеозахвата 1 [1]</div>
<div class="t" style="left:235.0px;top:406px;font-size:13.5px;color:#141414;letter-spacing:0.316px;">Камера 1 [1]</div>
<div class="t" style="left:207.0px;top:430px;font-size:13.5px;color:#141414;letter-spacing:0.618px;">Устройство видеозахвата 2 [2]</div>
<div class="t" style="left:235.0px;top:454px;font-size:13.5px;color:#141414;letter-spacing:0.650px;">Камера 2 [2]</div>
<div class="t" style="left:207.0px;top:478px;font-size:13.5px;color:#141414;letter-spacing:0.618px;">Устройство видеозахвата 8 [8]</div>
<div class="t" style="left:235.0px;top:502px;font-size:13.5px;color:#141414;letter-spacing:0.463px;">Камера 10 [10]</div>
<div class="t" style="left:263.0px;top:526px;font-size:13.5px;color:#141414;letter-spacing:0.558px;">Зоны изображения</div>
<div class="t" style="left:291.0px;top:550px;font-size:13.5px;color:#141414;letter-spacing:0.421px;">Main_10 [10.0]</div>
<div class="t" style="left:207.0px;top:574px;font-size:13.5px;color:#141414;letter-spacing:0.687px;">Устройство видеозахвата 9 [9]</div>
<div class="t" style="left:235.0px;top:598px;font-size:13.5px;color:#141414;letter-spacing:0.184px;">Камера 11 [11]</div>
<div class="t" style="left:207.0px;top:622px;font-size:13.5px;color:#141414;letter-spacing:0.276px;">ITV [5]</div>
<div class="t" style="left:235.0px;top:646px;font-size:13.5px;color:#141414;letter-spacing:0.650px;">Камера 6 [6]</div>
<div class="t" style="left:235.0px;top:670px;font-size:13.5px;color:#141414;letter-spacing:0.483px;">Камера 7 [7]</div>
<div class="t" style="left:263.0px;top:694px;font-size:13.5px;color:#141414;letter-spacing:0.558px;">Зоны изображения</div>
<div class="t" style="left:291.0px;top:718px;font-size:13.5px;color:#141414;letter-spacing:0.359px;">Main_7 [7.0]</div>
<div class="t" style="left:207.0px;top:742px;font-size:13.5px;color:#141414;letter-spacing:0.632px;">Tiandy [3]</div>
<div class="t" style="left:235.0px;top:766px;font-size:13.5px;color:#141414;letter-spacing:0.650px;">Камера 3 [3]</div>
<div class="t" style="left:263.0px;top:790px;font-size:13.5px;color:#141414;letter-spacing:0.558px;">Зоны изображения</div>
<div class="t" style="left:291.0px;top:814px;font-size:13.5px;color:#141414;letter-spacing:0.525px;">Main_3 [3.0]</div>
<div class="t" style="left:235.0px;top:838px;font-size:13.5px;color:#141414;letter-spacing:0.775px;">Камера 4 [4]</div>
<div class="t" style="left:179.0px;top:862px;font-size:13.5px;color:#141414;letter-spacing:0.537px;">Оповещения</div>
<div class="t" style="left:179.0px;top:886px;font-size:13.5px;color:#141414;letter-spacing:0.650px;">Интеграция и Автоматизация</div>
<div class="t" style="left:207.0px;top:910px;font-size:13.5px;color:#f4f6f8;letter-spacing:0.340px;">ONVIF-сервер 1 [1]</div>
<div class="t" style="left:207.0px;top:934px;font-size:13.5px;color:#141414;letter-spacing:-0.303px;">REST API 1 [1]</div>
<div class="t" style="left:207.0px;top:958px;font-size:13.5px;color:#7a7a7a;letter-spacing:0.273px;">my rtsp server [1]</div>
<div class="t" style="left:179.0px;top:981px;font-size:13.5px;color:#7a7a7a;letter-spacing:0.527px;">Серверы Мобильного приложения и Web</div>
<div class="t" style="left:207.0px;top:1005px;font-size:13.5px;color:#7a7a7a;letter-spacing:0.260px;">WebView Сервер 1 [1]</div>
<div class="t" style="left:235.0px;top:1029px;font-size:13.5px;color:#7a7a7a;letter-spacing:0.302px;">WebView Монитор 1 [1]</div>
<svg style="left:92px;top:67px;" width="26" height="24" viewBox="0 0 26 24"><g fill="url(#gIcon)"><path d="M0.5 3.5 Q0.5 1.3 6.3 1.3 Q12 1.3 12 3.5 Q12 4.5 9.5 7 L8 8.5 V17.5 L5 21 V8.5 L3 7 Q0.5 4.5 0.5 3.5 Z"/><path d="M10.5 5 Q10.5 2.8 17 2.8 Q23.5 2.8 23.5 5 Q23.5 6 21 8.5 L19 10.5 V20 L15.5 23 V10.5 L13 8.5 Q10.5 6 10.5 5 Z"/></g><ellipse cx="6.3" cy="3.3" rx="4.3" ry="0.9" fill="#dfe7f1"/><ellipse cx="17" cy="4.8" rx="4.8" ry="0.9" fill="#dfe7f1"/></svg>
<svg style="left:125px;top:94px;" width="16" height="20" viewBox="0 0 16 20"><path d="M0.5 3 Q0.5 0.8 7.3 0.8 Q14 0.8 14 3 Q14 4 11.5 6.5 L9.5 8.5 V16.5 L6 19.5 V8.5 L3 6.5 Q0.5 4 0.5 3 Z" fill="url(#gIcon)"/><ellipse cx="7.3" cy="2.9" rx="5" ry="0.9" fill="#dfe7f1"/></svg>
<svg style="left:92px;top:115px;" width="26" height="24" viewBox="0 0 26 24"><g fill="url(#gIcon)"><path d="M0.5 1.5 L9.5 10.5 L0.5 19 Z"/><path d="M12.5 3 L21 11.5 L12.5 20.5 Z"/><circle cx="10.5" cy="17.5" r="2"/><circle cx="22" cy="19.5" r="2"/></g></svg>
<svg style="left:126px;top:142px;" width="16" height="20" viewBox="0 0 16 20"><g fill="url(#gIcon)"><path d="M0.5 0.5 L9.5 9.5 L0.5 17.5 Z"/><circle cx="11" cy="15.5" r="2"/></g></svg>
<svg style="left:92px;top:163px;" width="26" height="24" viewBox="0 0 26 24"><rect x="0.8" y="2.8" width="14" height="17" rx="2.5" fill="#fff" stroke="#3d5f8f" stroke-width="1.6"/><rect x="2.5" y="5" width="5" height="13" fill="#4f73a0"/><rect x="6.5" y="4.5" width="17" height="17" rx="2.5" fill="#fff" stroke="#3d6a9f" stroke-width="1.6"/><rect x="8.3" y="6.3" width="13.4" height="13.4" rx="1" fill="#4d74a5"/><path d="M9 10 L14 7 L21 11 M9 16 L13.5 12 L20.5 18 M11 19.5 L14 7 M17 6.5 L21 15" stroke="#fff" stroke-width="1.1" fill="none"/><circle cx="15" cy="11.5" r="2" fill="#3aa0ff"/><circle cx="15" cy="11" r="0.9" fill="#fff"/></svg>
<svg style="left:92px;top:187px;" width="26" height="24" viewBox="0 0 26 24"><circle cx="9" cy="11.5" r="9" fill="#365b8c"/><circle cx="15.2" cy="12.9" r="9.8" fill="#fff"/><circle cx="15.2" cy="12.9" r="8.8" fill="url(#gClock)"/><path d="M15.2 5.5 V13 L20 15.8" stroke="#fff" stroke-width="1.3" fill="none"/></svg>
<svg style="left:122px;top:213px;" width="22" height="22" viewBox="0 0 22 22"><circle cx="10" cy="10" r="9" fill="url(#gClock)"/><circle cx="10" cy="10" r="8.6" fill="none" stroke="#3d6596" stroke-width="0.8"/><path d="M10 3 V10.5 L14.8 13" stroke="#fff" stroke-width="1.3" fill="none"/></svg>
<svg style="left:92px;top:235px;" width="26" height="24" viewBox="0 0 26 24"><path d="M0.5 3 L3 1.5 L11 1.5 L14 3 L14 21.5 L4.5 21.5 L0.5 19.5 Z" fill="#3a4d6a"/><path d="M3 1.5 L11 1.5 L14 3 L5 3 Z" fill="#b8c6de"/><rect x="5" y="3" width="9" height="18.5" fill="url(#gIcon)"/><rect x="6.5" y="6" width="6.2" height="1.2" fill="#fff"/><rect x="6.5" y="8.7" width="6.2" height="1.2" fill="#fff"/><circle cx="9.5" cy="17.8" r="1" fill="#fff"/><path d="M14.5 3.5 L16.5 2.5 L21 2.5 L24 4 L24 18 L15.5 18 L14.5 17 Z" fill="url(#gIcon)"/><rect x="17" y="6" width="5.5" height="1" fill="#fff"/><rect x="17" y="8.2" width="5.5" height="1" fill="#fff"/><circle cx="19.8" cy="15.8" r="0.9" fill="#fff"/></svg>
<svg style="left:120px;top:259px;" width="26" height="24" viewBox="0 0 26 24"><path d="M7 4.5 L9.5 2.5 L16 2.5 L20 4.5 L20 22.5 L11 22.5 L7 20.5 Z" fill="#3a4d6a"/><path d="M9.5 2.5 L16 2.5 L20 4.5 L11 4.5 Z" fill="#b8c6de"/><rect x="11" y="4.5" width="9" height="18" fill="url(#gIcon)"/><rect x="12.5" y="7" width="6" height="1.1" fill="#fff"/><rect x="12.5" y="9.5" width="6" height="1.1" fill="#fff"/><circle cx="15.5" cy="19" r="1" fill="#fff"/><path d="M5.2 0.8 L6.6 3.6 L9.7 4 L7.4 6.1 L8 9.2 L5.2 7.7 L2.4 9.2 L3 6.1 L0.7 4 L3.8 3.6 Z" fill="#ffff00" stroke="#000" stroke-width="1.1" stroke-linejoin="round"/></svg>
<svg style="left:151px;top:285px;" width="20" height="20" viewBox="0 0 20 20"><rect x="1" y="1" width="17" height="17" rx="2.2" fill="#fff" stroke="#3d6596" stroke-width="2"/><path d="M9.5 4 V15 M4 9.5 H15" stroke="#4068a0" stroke-width="3.6"/></svg>
<svg style="left:151px;top:309px;" width="20" height="20" viewBox="0 0 20 20"><circle cx="9.5" cy="9.5" r="8.8" fill="none" stroke="#3d6596" stroke-width="1.4"/><circle cx="9.5" cy="9.5" r="6.8" fill="#4d74a6"/><path d="M4.5 8 Q6 4 10.5 3.5" stroke="#c9d6e6" stroke-width="1.3" fill="none"/><path d="M14.5 11 Q13 15 8.5 15.5" stroke="#c9d6e6" stroke-width="1.3" fill="none"/><circle cx="9.5" cy="9.5" r="1.8" fill="#111"/></svg>
<svg style="left:147px;top:332px;" width="27" height="23" viewBox="0 0 27 23"><rect x="0.5" y="0.5" width="19.5" height="15.5" rx="1.5" fill="#3a5f92"/><rect x="3.5" y="3" width="13" height="10" fill="#c8d2e6"/><rect x="6.2" y="4.8" width="20" height="16" rx="1.5" fill="#3d6596"/><rect x="10.5" y="7" width="14" height="6" fill="#dce6f2"/><rect x="8.5" y="13.5" width="9" height="5.5" fill="#dce6f2"/></svg>
<svg style="left:148px;top:356px;" width="26" height="23" viewBox="0 0 26 23"><rect x="0" y="1.5" width="19" height="7" rx="1" fill="url(#gIcon)"/><path d="M19 3 L22 1.5 V8.5 L19 7 Z" fill="#3d5f8f"/><rect x="7" y="10" width="16" height="9.5" rx="1" fill="url(#gIcon)"/><path d="M20 12 L24.5 10 V19.5 L20 17.5 Z" fill="#3d5f8f"/><path d="M5 15 L14.5 21.5 L16 20 L7.5 13" fill="#3d5f8f" stroke="#fff" stroke-width="0.8"/><circle cx="4" cy="13" r="3.7" fill="#4f75a3" stroke="#fff" stroke-width="0.8"/></svg>
<svg style="left:178px;top:381px;" width="21" height="19" viewBox="0 0 21 19"><rect x="0.7" y="0.7" width="19" height="17" fill="#fff" stroke="#3b5d8f" stroke-width="1.4"/><rect x="4.5" y="6" width="8.5" height="6" rx="1" fill="url(#gIcon)"/><path d="M13 8 L16.5 6 V12 L13 10 Z" fill="#2f4f7d"/></svg>
<svg style="left:206px;top:409px;" width="21" height="12" viewBox="0 0 21 12"><rect x="0" y="0.5" width="14" height="10" rx="1.5" fill="url(#gIcon)"/><path d="M14 3.5 L19.5 0.5 V10.5 L14 7.5 Z" fill="#3d5f8f"/></svg>
<svg style="left:178px;top:429px;" width="21" height="19" viewBox="0 0 21 19"><rect x="0.7" y="0.7" width="19" height="17" fill="#fff" stroke="#3b5d8f" stroke-width="1.4"/><rect x="4.5" y="6" width="8.5" height="6" rx="1" fill="url(#gIcon)"/><path d="M13 8 L16.5 6 V12 L13 10 Z" fill="#2f4f7d"/></svg>
<svg style="left:206px;top:457px;" width="21" height="12" viewBox="0 0 21 12"><rect x="0" y="0.5" width="14" height="10" rx="1.5" fill="url(#gIcon)"/><path d="M14 3.5 L19.5 0.5 V10.5 L14 7.5 Z" fill="#3d5f8f"/></svg>
<svg style="left:178px;top:477px;" width="21" height="19" viewBox="0 0 21 19"><rect x="0.7" y="0.7" width="19" height="17" fill="#fff" stroke="#3b5d8f" stroke-width="1.4"/><rect x="4.5" y="6" width="8.5" height="6" rx="1" fill="url(#gIcon)"/><path d="M13 8 L16.5 6 V12 L13 10 Z" fill="#2f4f7d"/></svg>
<svg style="left:206px;top:505px;" width="21" height="12" viewBox="0 0 21 12"><rect x="0" y="0.5" width="14" height="10" rx="1.5" fill="url(#gIcon)"/><path d="M14 3.5 L19.5 0.5 V10.5 L14 7.5 Z" fill="#3d5f8f"/></svg>
<svg style="left:234px;top:524px;" width="22" height="20" viewBox="0 0 22 20"><path d="M7.3 0.6 H19.6 V10.4 H15.6 V17.6 H5.2 V13.5 H0.6 V5.3 H7.3 Z" fill="#b4c0dc" stroke="#3d6596" stroke-width="1.3"/></svg>
<svg style="left:262px;top:548px;" width="22" height="20" viewBox="0 0 22 20"><path d="M7.3 0.6 H19.6 V10.4 H15.6 V17.6 H5.2 V13.5 H0.6 V5.3 H7.3 Z" fill="#b4c0dc" stroke="#3d6596" stroke-width="1.3"/></svg>
<svg style="left:178px;top:573px;" width="21" height="19" viewBox="0 0 21 19"><rect x="0.7" y="0.7" width="19" height="17" fill="#fff" stroke="#3b5d8f" stroke-width="1.4"/><rect x="4.5" y="6" width="8.5" height="6" rx="1" fill="url(#gIcon)"/><path d="M13 8 L16.5 6 V12 L13 10 Z" fill="#2f4f7d"/></svg>
<svg style="left:206px;top:601px;" width="21" height="12" viewBox="0 0 21 12"><rect x="0" y="0.5" width="14" height="10" rx="1.5" fill="url(#gIcon)"/><path d="M14 3.5 L19.5 0.5 V10.5 L14 7.5 Z" fill="#3d5f8f"/></svg>
<svg style="left:178px;top:621px;" width="21" height="19" viewBox="0 0 21 19"><rect x="0.7" y="0.7" width="19" height="17" fill="#fff" stroke="#3b5d8f" stroke-width="1.4"/><rect x="4.5" y="6" width="8.5" height="6" rx="1" fill="url(#gIcon)"/><path d="M13 8 L16.5 6 V12 L13 10 Z" fill="#2f4f7d"/></svg>
<svg style="left:206px;top:649px;" width="21" height="12" viewBox="0 0 21 12"><rect x="0" y="0.5" width="14" height="10" rx="1.5" fill="url(#gIcon)"/><path d="M14 3.5 L19.5 0.5 V10.5 L14 7.5 Z" fill="#3d5f8f"/></svg>
<svg style="left:206px;top:673px;" width="21" height="12" viewBox="0 0 21 12"><rect x="0" y="0.5" width="14" height="10" rx="1.5" fill="url(#gIcon)"/><path d="M14 3.5 L19.5 0.5 V10.5 L14 7.5 Z" fill="#3d5f8f"/></svg>
<svg style="left:234px;top:692px;" width="22" height="20" viewBox="0 0 22 20"><path d="M7.3 0.6 H19.6 V10.4 H15.6 V17.6 H5.2 V13.5 H0.6 V5.3 H7.3 Z" fill="#b4c0dc" stroke="#3d6596" stroke-width="1.3"/></svg>
<svg style="left:262px;top:716px;" width="22" height="20" viewBox="0 0 22 20"><path d="M7.3 0.6 H19.6 V10.4 H15.6 V17.6 H5.2 V13.5 H0.6 V5.3 H7.3 Z" fill="#b4c0dc" stroke="#3d6596" stroke-width="1.3"/></svg>
<svg style="left:178px;top:741px;" width="21" height="19" viewBox="0 0 21 19"><rect x="0.7" y="0.7" width="19" height="17" fill="#fff" stroke="#3b5d8f" stroke-width="1.4"/><rect x="4.5" y="6" width="8.5" height="6" rx="1" fill="url(#gIcon)"/><path d="M13 8 L16.5 6 V12 L13 10 Z" fill="#2f4f7d"/></svg>
<svg style="left:206px;top:769px;" width="21" height="12" viewBox="0 0 21 12"><rect x="0" y="0.5" width="14" height="10" rx="1.5" fill="url(#gIcon)"/><path d="M14 3.5 L19.5 0.5 V10.5 L14 7.5 Z" fill="#3d5f8f"/></svg>
<svg style="left:234px;top:788px;" width="22" height="20" viewBox="0 0 22 20"><path d="M7.3 0.6 H19.6 V10.4 H15.6 V17.6 H5.2 V13.5 H0.6 V5.3 H7.3 Z" fill="#b4c0dc" stroke="#3d6596" stroke-width="1.3"/></svg>
<svg style="left:262px;top:812px;" width="22" height="20" viewBox="0 0 22 20"><path d="M7.3 0.6 H19.6 V10.4 H15.6 V17.6 H5.2 V13.5 H0.6 V5.3 H7.3 Z" fill="#b4c0dc" stroke="#3d6596" stroke-width="1.3"/></svg>
<svg style="left:206px;top:841px;" width="21" height="12" viewBox="0 0 21 12"><rect x="0" y="0.5" width="14" height="10" rx="1.5" fill="url(#gIcon)"/><path d="M14 3.5 L19.5 0.5 V10.5 L14 7.5 Z" fill="#3d5f8f"/></svg>
<svg style="left:148px;top:859px;" width="26" height="23" viewBox="0 0 26 23"><path d="M0 17 Q3 15 3 9 Q3 1.5 7 0.5 Q10.5 0 11.5 2.5 Q9 5 9 11 L9 17.5 L7 19.5 L5 17.5 Z" fill="url(#gIcon)"/><path d="M9.5 19.5 Q12.5 17.5 12.5 10 Q12.5 3.5 16.8 3 Q21.5 3.5 21.5 10 Q21.5 17.5 24.5 19.5 Z" fill="url(#gIcon)"/><rect x="15" y="19" width="3.5" height="2.5" fill="#3d5f8f"/></svg>
<svg style="left:148px;top:882px;" width="26" height="24" viewBox="0 0 26 24"><path d="M0 11.5 L5.5 4.3 L11.5 11.5 H8 Q8 16.5 13.5 17 Q10 20.5 6 18.8 Q3 17 3 11.5 Z" fill="#34568a"/><path d="M6 3.5 Q13 0 17 3 Q20.5 6 20.5 10.5 H24.5 L18.5 17 L12.5 10.5 H15.5 Q15 5.5 11 4.5 Q8.5 4 6 3.5 Z" fill="url(#gIcon)"/></svg>
<svg style="left:177px;top:908px;" width="24" height="12" viewBox="0 0 24 12"><rect x="0" y="1.8" width="9.5" height="5.5" rx="0.8" fill="url(#gIcon)"/><path d="M9.5 3.5 L13 1.5 V7.5 L9.5 5.5Z" fill="#3d5f8f"/><g fill="none" stroke="#3d5f8f" stroke-width="1.3"><path d="M15.2 3.8 A4 4 0 0 1 19.4 8"/><path d="M15.2 0.8 A7 7 0 0 1 22.4 8"/></g><circle cx="15.8" cy="7.4" r="1.2" fill="#3d5f8f"/></svg>
<div style="left:177px;top:917px;font-size:10px;line-height:10px;color:#2c4a78;letter-spacing:-0.5px;transform:scaleX(0.78);transform-origin:0 0;font-family:'Liberation Sans'">ONVIF</div>
<svg style="left:177px;top:932px;" width="24" height="12" viewBox="0 0 24 12"><rect x="0" y="1.8" width="9.5" height="5.5" rx="0.8" fill="url(#gIcon)"/><path d="M9.5 3.5 L13 1.5 V7.5 L9.5 5.5Z" fill="#3d5f8f"/><g fill="none" stroke="#3d5f8f" stroke-width="1.3"><path d="M15.2 3.8 A4 4 0 0 1 19.4 8"/><path d="M15.2 0.8 A7 7 0 0 1 22.4 8"/></g><circle cx="15.8" cy="7.4" r="1.2" fill="#3d5f8f"/></svg>
<div style="left:177px;top:941px;font-size:11px;line-height:11px;color:#243a5e;letter-spacing:-0.2px;transform:scaleX(0.82);transform-origin:0 0;font-family:'Liberation Sans'">REST</div>
<svg style="left:177px;top:956px;" width="24" height="12" viewBox="0 0 24 12"><rect x="0" y="1.8" width="9.5" height="5.5" rx="0.8" fill="url(#gIcon)"/><path d="M9.5 3.5 L13 1.5 V7.5 L9.5 5.5Z" fill="#3d5f8f"/><g fill="none" stroke="#3d5f8f" stroke-width="1.3"><path d="M15.2 3.8 A4 4 0 0 1 19.4 8"/><path d="M15.2 0.8 A7 7 0 0 1 22.4 8"/></g><circle cx="15.8" cy="7.4" r="1.2" fill="#3d5f8f"/></svg>
<div style="left:177px;top:965px;font-size:11px;line-height:11px;color:#243a5e;letter-spacing:-0.2px;transform:scaleX(0.82);transform-origin:0 0;font-family:'Liberation Sans'">RTS</div>
<svg style="left:190px;top:966px;" width="12" height="12" viewBox="0 0 12 12"><path d="M2.5 2.5 L9.5 9.5 M9.5 2.5 L2.5 9.5" stroke="#000" stroke-width="4.6" stroke-linecap="round"/><path d="M2.5 2.5 L9.5 9.5 M9.5 2.5 L2.5 9.5" stroke="#5cb8f5" stroke-width="2.4" stroke-linecap="round"/></svg>
<svg style="left:150px;top:978px;" width="24" height="22" viewBox="0 0 24 22"><rect x="1" y="1" width="11.7" height="17.8" rx="1.5" fill="#3d6596"/><rect x="2.5" y="3.5" width="8.7" height="13" fill="#b8c6de"/><rect x="5" y="1.8" width="3.5" height="0.9" fill="#fff"/><circle cx="13.6" cy="10" r="6.6" fill="#fff"/><circle cx="13.6" cy="10" r="5.6" fill="#3d6596"/><path d="M8 10 H19.2 M13.6 4.4 V15.6 M9 7 H18.2 M9 13 H18.2" stroke="#fff" stroke-width="0.9"/><ellipse cx="13.6" cy="10" rx="2.6" ry="5.6" fill="none" stroke="#fff" stroke-width="0.9"/></svg>
<svg style="left:176px;top:1001px;" width="26" height="24" viewBox="0 0 26 24"><circle cx="11.8" cy="10.9" r="9.7" fill="none" stroke="#3d6596" stroke-width="1.3"/><circle cx="11.8" cy="10.9" r="7.9" fill="#4d74a6"/><path d="M6.5 6.5 L8.8 15.5 L11.8 9 L14.8 15.5 L17 6.5" fill="none" stroke="#fff" stroke-width="2"/><path d="M15.5 12.5 L23.5 20.5 M23.5 12.5 L15.5 20.5" stroke="#000" stroke-width="4.6" stroke-linecap="round"/><path d="M15.5 12.5 L23.5 20.5 M23.5 12.5 L15.5 20.5" stroke="#5cb8f5" stroke-width="2.4" stroke-linecap="round"/></svg>
<svg style="left:204px;top:1025px;" width="26" height="24" viewBox="0 0 26 24"><rect x="2.8" y="2.8" width="18.5" height="16" rx="1.5" fill="#fff" stroke="#3d6596" stroke-width="2.2"/><rect x="5" y="5" width="6" height="4" fill="#3d6596"/><rect x="11" y="5" width="8" height="3" fill="#c5d0e2"/><rect x="5" y="11" width="6" height="2" fill="#aab8d0"/><path d="M0.5 12.5 L2.8 21 L5 14.5 L7.2 21 L9.5 12.5" fill="none" stroke="#333d4d" stroke-width="2"/><path d="M16 12.5 L23.5 20 M23.5 12.5 L16 20" stroke="#000" stroke-width="4.6" stroke-linecap="round"/><path d="M16 12.5 L23.5 20 M23.5 12.5 L16 20" stroke="#5cb8f5" stroke-width="2.4" stroke-linecap="round"/></svg>
<svg style="left:560px;top:239px;" width="16" height="16" viewBox="0 0 16 16"><circle cx="8" cy="8" r="7.8" fill="#33b233"/><path d="M8 3.5V12.5M3.5 8H12.5" stroke="#fff" stroke-width="2.4"/></svg>
<svg style="left:533px;top:911px;" width="16" height="16" viewBox="0 0 16 16"><circle cx="8" cy="8" r="7.8" fill="#33b233"/><path d="M8 3.5V12.5M3.5 8H12.5" stroke="#fff" stroke-width="2.4"/></svg>
<svg style="left:559px;top:909px;" width="18" height="18" viewBox="0 0 18 18"><path d=""/><g fill="none" stroke="#3d5f8f" stroke-width="1.3"><circle cx="9" cy="9" r="5"/><path d="M7.6 4.2 L7.6 1 L10.4 1 L10.4 4.2" transform="rotate(0 9 9)"/><path d="M7.6 4.2 L7.6 1 L10.4 1 L10.4 4.2" transform="rotate(45 9 9)"/><path d="M7.6 4.2 L7.6 1 L10.4 1 L10.4 4.2" transform="rotate(90 9 9)"/><path d="M7.6 4.2 L7.6 1 L10.4 1 L10.4 4.2" transform="rotate(135 9 9)"/><path d="M7.6 4.2 L7.6 1 L10.4 1 L10.4 4.2" transform="rotate(180 9 9)"/><path d="M7.6 4.2 L7.6 1 L10.4 1 L10.4 4.2" transform="rotate(225 9 9)"/><path d="M7.6 4.2 L7.6 1 L10.4 1 L10.4 4.2" transform="rotate(270 9 9)"/><path d="M7.6 4.2 L7.6 1 L10.4 1 L10.4 4.2" transform="rotate(315 9 9)"/></g><circle cx="9" cy="9" r="2.5" fill="none" stroke="#3d5f8f" stroke-width="1"/></svg>
<svg style="left:16px;top:36px;" width="22" height="22" viewBox="0 0 22 22"><circle cx="10.5" cy="10.5" r="10" fill="#3b4557"/><path d="M10.5 4.5V16.5M4.5 10.5H16.5" stroke="#fff" stroke-width="2.2"/></svg>
<svg style="left:44px;top:44px;" width="9" height="5" viewBox="0 0 9 5"><path d="M0 0H9L4.5 5Z" fill="#3b4557"/></svg>
<div style="left:60px;top:34px;width:1px;height:24px;background:#dcdcdc"></div>
<div style="left:71px;top:36px;width:46px;height:20px;background:linear-gradient(#2f5f98,#3b86d3);border:1px solid #2d4f7a;border-radius:10px"></div>
<div class="t" style="left:79.0px;top:36px;font-size:11.5px;color:#fff;letter-spacing:-1.625px;font-weight:bold;">ON</div>
<div style="left:97px;top:36px;width:21px;height:20px;background:radial-gradient(circle at 50% 45%,#d8d8d8,#f4f4f4 90%);border:1px solid #2a3f5c;border-radius:50%"></div>
<div style="left:123px;top:32px;width:28px;height:28px;background:#bcd8ea"></div>
<svg style="left:123px;top:32px;" width="28" height="28" viewBox="0 0 28 28"><g fill="#3b4557"><circle cx="14" cy="14" r="7.8"/><rect x="12" y="4.1" width="4" height="5" rx="0.6" transform="rotate(0 14 14)"/><rect x="12" y="4.1" width="4" height="5" rx="0.6" transform="rotate(45 14 14)"/><rect x="12" y="4.1" width="4" height="5" rx="0.6" transform="rotate(90 14 14)"/><rect x="12" y="4.1" width="4" height="5" rx="0.6" transform="rotate(135 14 14)"/><rect x="12" y="4.1" width="4" height="5" rx="0.6" transform="rotate(180 14 14)"/><rect x="12" y="4.1" width="4" height="5" rx="0.6" transform="rotate(225 14 14)"/><rect x="12" y="4.1" width="4" height="5" rx="0.6" transform="rotate(270 14 14)"/><rect x="12" y="4.1" width="4" height="5" rx="0.6" transform="rotate(315 14 14)"/></g><circle cx="14" cy="14" r="4.6" fill="#bcd8ea"/></svg>
<svg style="left:156px;top:34px;" width="26" height="24" viewBox="0 0 26 24"><path d="M3 21 L9.5 3.5 Q10 2 11.5 2 L12.5 2 Q14 2 14.5 3.5 L17 10 Q17.5 12 15.5 13.5 L14 14.5 L6.5 14.5" fill="none" stroke="#3b4557" stroke-width="3" stroke-linejoin="round" stroke-linecap="round"/><path d="M10.5 11 L12 6 L13.8 11 Z" fill="#f7f7f7"/><path d="M15 21.5 L22 9.5" stroke="#3b4557" stroke-width="3.2" stroke-linecap="butt"/><path d="M14.2 22.5 L15 19.5 L16.8 20.5 Z" fill="#3b4557"/></svg>
<svg style="left:190px;top:35px;" width="18" height="22" viewBox="0 0 18 22"><rect x="0.5" y="2.5" width="17" height="2.5" fill="#3b4557"/><rect x="6" y="0" width="6" height="3" fill="none" stroke="#3b4557" stroke-width="1.4"/><path d="M2 6.5 H16 V20 Q16 21.5 14.5 21.5 H3.5 Q2 21.5 2 20 Z" fill="#3b4557"/><g fill="#f7f7f7"><rect x="4.3" y="8" width="1.8" height="11.5"/><rect x="8.1" y="8" width="1.8" height="11.5"/><rect x="11.9" y="8" width="1.8" height="11.5"/></g></svg>
<svg style="left:220px;top:37px;" width="19" height="19" viewBox="0 0 19 19"><circle cx="9.5" cy="9.5" r="9" fill="#3b4557"/><path d="M11.5 4.5 L6.5 9.5 L11.5 14.5" fill="none" stroke="#fff" stroke-width="2.2"/></svg>
<svg style="left:250px;top:37px;" width="19" height="19" viewBox="0 0 19 19"><circle cx="9.5" cy="9.5" r="9" fill="#babcc0"/><path d="M7.5 4.5 L12.5 9.5 L7.5 14.5" fill="none" stroke="#f0f0f0" stroke-width="2.2"/></svg>
<svg style="left:480px;top:36px;" width="21" height="21" viewBox="0 0 21 21"><circle cx="10.5" cy="10.5" r="9.3" fill="none" stroke="#3b4557" stroke-width="2"/><path d="M7.2 8 Q7.2 4.6 10.6 4.6 Q14 4.6 14 7.6 Q14 9.6 11.6 10.6 Q10.5 11.1 10.5 13" fill="none" stroke="#3b4557" stroke-width="2"/><circle cx="10.5" cy="15.8" r="1.3" fill="#3b4557"/></svg>
<svg style="left:509px;top:36px;" width="23" height="22" viewBox="0 0 23 22"><rect x="3" y="1" width="16" height="13" rx="2" fill="#b4b6ba"/><path d="M7 3.5V11.5M11 3.5V11.5H11M11 3.5H14Q15.5 3.5 15.5 5.5Q15.5 7.5 14 7.5H11" fill="none" stroke="#f7f7f7" stroke-width="1.8"/><rect x="10.2" y="14" width="1.6" height="3.5" fill="#b4b6ba"/><rect x="1" y="18.3" width="20" height="1.6" fill="#b4b6ba"/><rect x="9" y="17" width="4" height="4" fill="#b4b6ba"/></svg>
<svg style="left:543px;top:36px;" width="15" height="21" viewBox="0 0 15 21"><path d="M0 0 H14 V20.5 L7 13.8 L0 20.5 Z" fill="#3b4557"/></svg>
<svg style="left:567px;top:35px;" width="22" height="23" viewBox="0 0 22 23"><circle cx="13.5" cy="9" r="7" fill="none" stroke="#3b4557" stroke-width="2.2"/><path d="M8.5 14 L2.5 20" stroke="#3b4557" stroke-width="3" stroke-linecap="round"/></svg>
</body></html>
